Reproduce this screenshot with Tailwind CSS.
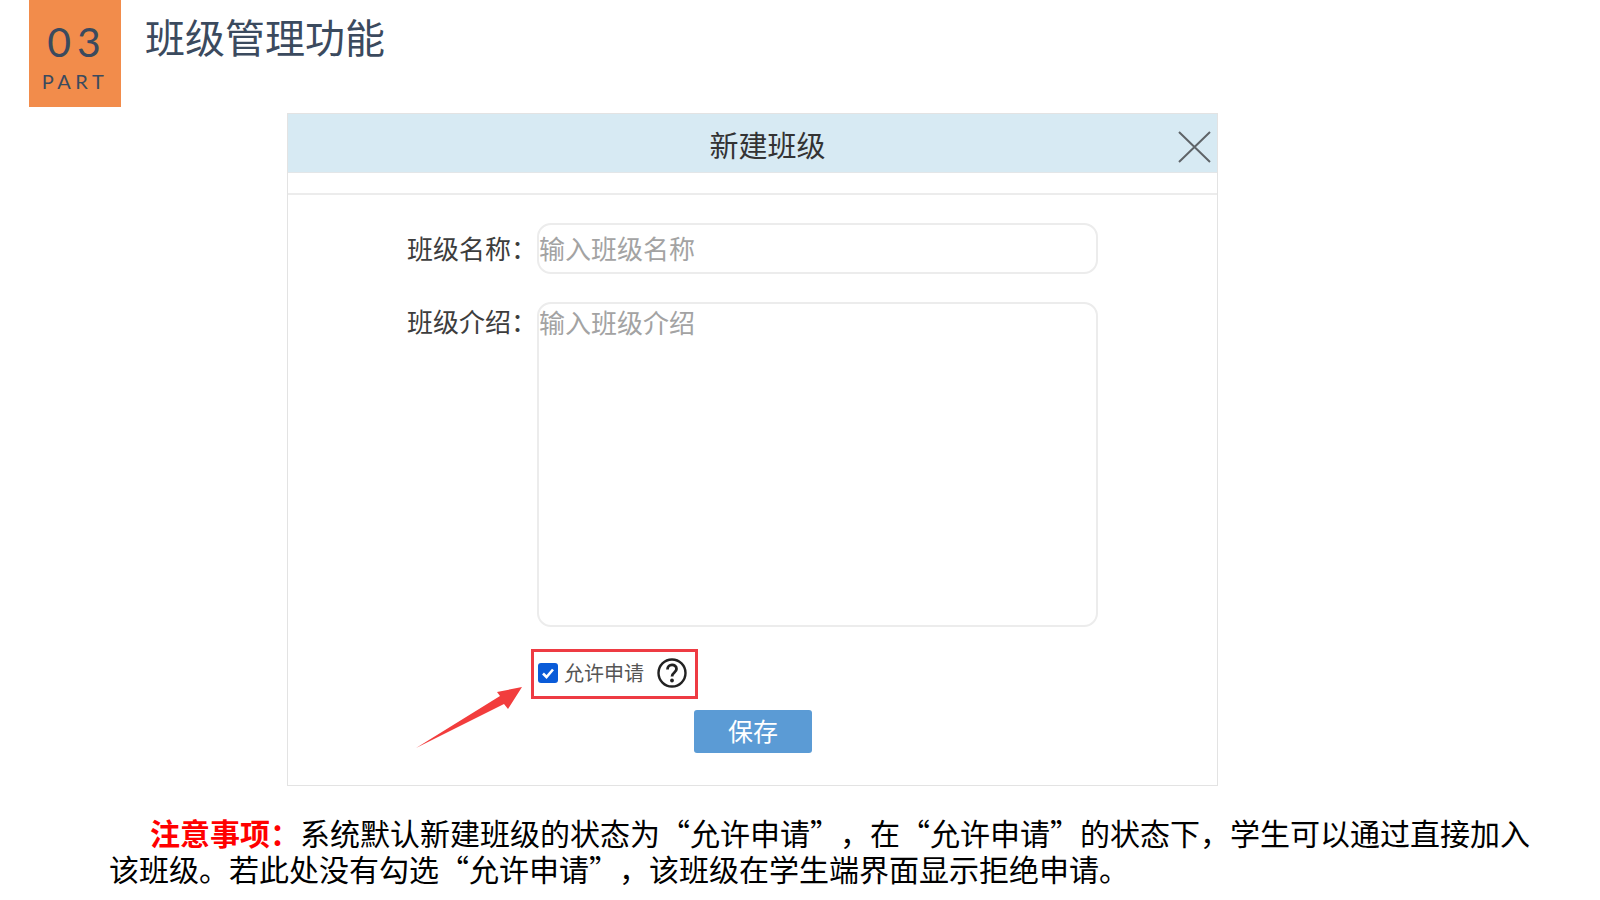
<!DOCTYPE html>
<html lang="zh-CN">
  <head>
    <meta charset="UTF-8" />
    <meta name="viewport" content="width=device-width, initial-scale=1.0" />
    <title>班级管理功能</title>
    <script src="https://cdn.jsdelivr.net/npm/@tailwindcss/browser@4"></script>
  </head>
  <body class="bg-white font-['Noto_Sans_CJK_SC',sans-serif] w-[1600px] h-[900px] overflow-hidden [text-spacing-trim:space-all]">
    <!-- section header -->
    <header class="flex h-[113px] pl-[29px]">
      <div class="w-[92px] h-[107px] bg-[#f28c4b] flex flex-col items-center text-[#3b4a5e] font-['Lato',sans-serif]">
        <span class="mt-[20px] ml-[4px] text-[41px] leading-[44px] tracking-[6px]">03</span>
        <span class="mt-[5px] text-[20px] leading-[24px] tracking-[4.5px]">PART</span>
      </div>
      <h1 class="ml-[24px] mt-[10px] text-[40px] leading-[52px] text-[#3b4a5e] whitespace-nowrap">班级管理功能</h1>
    </header>

    <!-- dialog -->
    <section class="relative ml-[287px] w-[931px] h-[673px] border border-[#e3e3e3]">
      <div class="relative h-[59px] bg-[#d7eaf3] border-b border-[#e3e6e8] flex items-center justify-center">
        <h2 class="ml-[30px] mt-[3px] text-[29px] text-[#333] leading-none">新建班级</h2>
        <svg class="absolute right-[6px] top-[16px]" width="34" height="34" viewBox="0 0 34 34" fill="none" stroke="#5f6468" stroke-width="2">
          <path d="M2 2 L33 32 M33 2 L2 32" />
        </svg>
      </div>
      <div class="h-[22px] border-b-2 border-[#ececec]"></div>

      <div class="pt-[28px]">
        <div class="flex h-[51px] items-center">
          <label class="w-[249px] text-right mb-[2px] text-[26px] text-[#3d3d3d] leading-none whitespace-nowrap">班级名称：</label>
          <div class="w-[561px] h-[51px] border-2 border-[#ececec] rounded-[14px] flex items-center pb-[2px] text-[26px] text-[#a3a3a3] leading-none">输入班级名称</div>
        </div>
        <div class="flex mt-[28px]">
          <label class="w-[249px] pt-[4px] text-right text-[26px] text-[#3d3d3d] leading-[30px] whitespace-nowrap">班级介绍：</label>
          <div class="w-[561px] h-[325px] border-2 border-[#ececec] rounded-[14px] pt-[2px] text-[26px] leading-[32px] text-[#a3a3a3]">输入班级介绍</div>
        </div>

        <div class="ml-[243px] mt-[22px] w-[167px] h-[50px] border-[3px] border-[#ee3b43] flex items-center pl-[4px] pb-[3px]">
          <span class="w-[20px] h-[20px] rounded-[3px] bg-[#0a5bd8] flex items-center justify-center">
            <svg width="16" height="16" viewBox="0 0 16 16" fill="none" stroke="#fff" stroke-width="2.6"><path d="M3 8.5 L6.5 12 L13 4.5" /></svg>
          </span>
          <span class="ml-[6px] text-[20px] text-[#555] leading-none whitespace-nowrap">允许申请</span>
          <svg class="ml-[13px] mt-[1px]" width="30" height="30" viewBox="0 0 30 30" fill="none" stroke="#222" stroke-width="2.4">
            <circle cx="15" cy="15" r="13.5" />
            <path d="M10.5 11.5 C10.5 5.5 19.5 5.5 19.5 11 C19.5 14.5 15 14.5 15 18.5" stroke-width="2.8" />
            <circle cx="15" cy="22.5" r="1.9" fill="#222" stroke="none" />
          </svg>
        </div>

        <button class="block ml-[406px] mt-[11px] pb-[2px] w-[118px] h-[43px] rounded-[3px] bg-[#5b9bd5] text-white text-[25px] leading-none">保存</button>
      </div>

      <!-- arrow pointing at the checkbox -->
      <svg class="absolute left-[128px] top-[572px]" width="106" height="64" viewBox="0 0 106 64">
        <path d="M0 62 L84 10 L81 6 L106 1 L92 23 L88 18 Z" fill="#f23d3d" />
      </svg>
    </section>

    <!-- note -->
    <p class="ml-[109px] mt-[28px] w-[1431px] text-[30px] leading-[36px] text-black indent-[41px]"><strong class="font-bold text-[#ff0000]">注意事项：</strong>系统默认新建班级的状态为“允许申请”，在“允许申请”的状态下，学生可以通过直接加入该班级。若此处没有勾选“允许申请”，该班级在学生端界面显示拒绝申请。</p>
  </body>
</html>
